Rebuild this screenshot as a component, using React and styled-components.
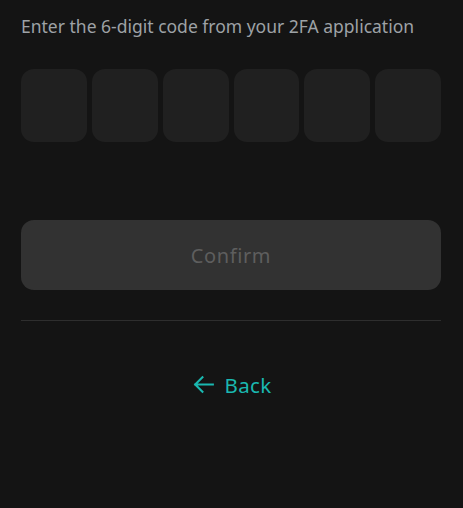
import React from 'react'
import styled, { createGlobalStyle } from 'styled-components'

const Global = createGlobalStyle`
    html, body {
        margin: 0;
        background: #141414;
        font-family: "Noto Sans", "Open Sans", sans-serif;
    }
`;

const Page = styled.div`
    padding: 14px 22px 0 21px;
    display: flex;
    flex-direction: column;
`;
const Prompt = styled.div`
    font-size: 17.5px;
    line-height: 24px;
    color: #9ea2a6;
`;
const CodeRow = styled.div`
    display: grid;
    grid-template-columns: repeat(6, 1fr);
    gap: 5px;
    margin-top: 31px;
`;
const Digit = styled.input`
    height: 73px;
    min-width: 0;
    box-sizing: border-box;
    border: none;
    border-radius: 13px;
    background: #202020;
    color: #eee;
    font: inherit;
    font-size: 28px;
    text-align: center;
    outline: none;
`;
const Confirm = styled.button`
    margin-top: 78px;
    height: 70px;
    border: none;
    border-radius: 13px;
    background: #323232;
    color: #5e5e5e;
    font-family: inherit;
    font-size: 20px;
    letter-spacing: 0.6px;
    cursor: not-allowed;
`;
const Divider = styled.hr`
    margin: 30px 0 0;
    border: none;
    border-top: 1px solid #2e2e2e;
`;
const BackLink = styled.a`
    margin-top: 51px;
    align-self: center;
    display: flex;
    align-items: center;
    gap: 9px;
    color: #1ab8b0;
    font-size: 20.5px;
    line-height: 24px;
    letter-spacing: 0.3px;
    text-decoration: none;
    cursor: pointer;
    svg {
        width: 25px;
        height: 25px;
    }
`;

const App = () => {
    return (
        <Page>
            <Global />
            <Prompt>Enter the 6-digit code from your 2FA application</Prompt>
            <CodeRow>
                {[0, 1, 2, 3, 4, 5].map(i => (
                    <Digit key={i} maxLength={1} inputMode="numeric" />
                ))}
            </CodeRow>
            <Confirm disabled>Confirm</Confirm>
            <Divider />
            <BackLink>
                <svg viewBox="0 0 24 24" fill="none" stroke="currentColor" strokeWidth="2" strokeLinecap="square">
                    <path d="M21 12H4M11 5l-7 7 7 7" />
                </svg>
                Back
            </BackLink>
        </Page>
    );
}

export default App
